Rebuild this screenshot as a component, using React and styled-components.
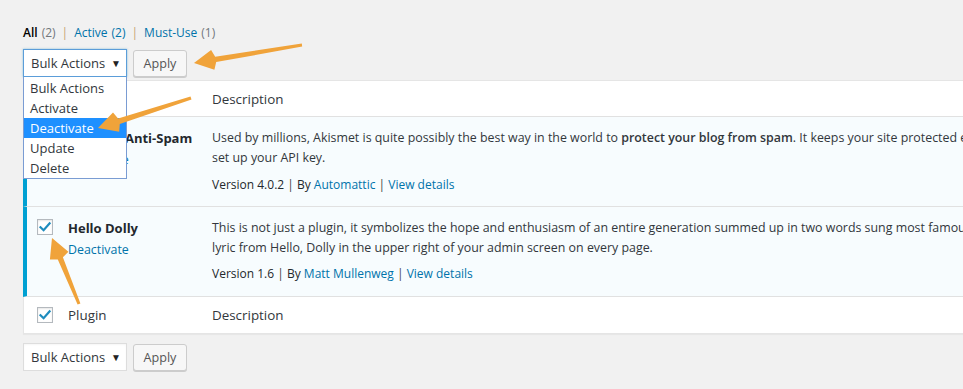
import React from "react";
import styled, { createGlobalStyle } from "styled-components";

const GlobalStyle = createGlobalStyle`
  html, body { margin: 0; padding: 0; background: #f1f1f1; overflow: hidden; }
  body { font-family: "Open Sans", "Noto Sans", sans-serif; font-size: 12px; color: #444; }
`;

const Page = styled.div`
  position: relative;
  width: 963px;
  height: 389px;
  padding: 23px 0 0 23px;
  box-sizing: border-box;
`;

const Subsub = styled.div`
  display: flex;
  align-items: center;
  height: 20px;
  line-height: 20px;
  color: #72777c;
  font-size: 12px;
`;

const FilterLink = styled.span`
  color: ${(p) => (p.$current ? "#000" : "#0073aa")};
  font-weight: ${(p) => (p.$current ? 600 : 400)};
`;

const Count = styled.span`
  color: ${(p) => (p.$link ? "#0073aa" : "#72777c")};
  margin-left: 4px;
`;

const Sep = styled.span`
  color: #c8a370;
  margin: 0 6px;
`;

const TableNav = styled.div`
  display: flex;
  gap: 6px;
  margin: ${(p) => (p.$bottom ? "9px 0 0" : "6px 0 3px")};
`;

const SelectWrap = styled.div`
  position: relative;
  width: 104px;
  height: 28px;
`;

const Select = styled.div`
  box-sizing: border-box;
  width: 104px;
  height: 28px;
  background: #fff;
  border: 1px solid ${(p) => (p.$focus ? "#5b9dd9" : "#ddd")};
  box-shadow: ${(p) => (p.$focus ? "0 0 2px rgba(30,140,190,.5)" : "inset 0 1px 2px rgba(0,0,0,.04)")};
  display: flex;
  align-items: center;
  justify-content: space-between;
  padding: 0 5px 0 7px;
  color: #32373c;
  font-size: 13px;
`;

const Caret = styled.span`
  font-size: 10px;
  color: #222;
`;

const Menu = styled.div`
  position: absolute;
  top: 28px;
  left: 0;
  width: 104px;
  box-sizing: border-box;
  background: #fff;
  border: 1px solid #7a9cd3;
  border-top: none;
  z-index: 5;
  padding: 1px 0 0;
`;

const MenuItem = styled.div`
  height: 20px;
  line-height: 21px;
  padding-left: 6px;
  font-size: 13px;
  color: ${(p) => (p.$active ? "#fff" : "#32373c")};
  background: ${(p) => (p.$active ? "#1e90ff" : "transparent")};
`;

const Button = styled.div`
  box-sizing: border-box;
  width: 54px;
  height: 27px;
  margin-top: 1px;
  background: #f7f7f7;
  border: 1px solid #ccc;
  border-radius: 3px;
  box-shadow: 0 1px 0 #ccc;
  color: #555;
  font-size: 12.6px;
  display: flex;
  align-items: center;
  justify-content: center;
`;

const Table = styled.div`
  width: 1200px;
  background: #fff;
  border: 1px solid #e5e5e5;
  box-shadow: 0 1px 1px rgba(0, 0, 0, 0.04);
`;

const Row = styled.div`
  display: grid;
  grid-template-columns: 41px 144px 1fr;
  background: ${(p) => (p.$active ? "#f7fcfe" : "#fff")};
  border-left: ${(p) => (p.$active ? "4px solid #00a0d2" : "0")};
  margin-left: ${(p) => (p.$active ? "-1px" : "0")};
  padding-left: ${(p) => (p.$active ? "0" : "3px")};
  border-bottom: ${(p) => (p.$last ? "0" : "1px solid #e1e1e1")};
  min-height: ${(p) => p.$h}px;
  box-sizing: border-box;
`;

const CheckCell = styled.div`
  padding: ${(p) => p.$pt}px 0 0 10px;
`;

const Check = styled.div`
  width: 16px;
  height: 16px;
  box-sizing: border-box;
  border: 1px solid #b4b9be;
  background: #fff;
  box-shadow: inset 0 1px 2px rgba(0,0,0,.1);
  display: flex;
  align-items: center;
  justify-content: center;
`;

const HeadText = styled.div`
  font-size: 13.4px;
  color: #32373c;
  padding-top: ${(p) => p.$pt}px;
  line-height: 20px;
`;

const NameCell = styled.div`
  padding-top: 11px;
`;

const Title = styled.div`
  font-weight: 700;
  font-size: 13px;
  color: #23282d;
  line-height: 21px;
`;

const ActionLink = styled.div`
  color: #0073aa;
  font-size: 12.4px;
  line-height: 21px;
`;

const DescCell = styled.div`
  padding: 11px 0 11px;
  font-size: 12.4px;
  line-height: 20px;
  color: #32373c;
`;

const Line = styled.div`
  white-space: nowrap;
`;

const Strong = styled.strong`
  font-weight: 600;
`;

const Version = styled.div`
  margin-top: ${(p) => p.$mt}px;
  white-space: nowrap;
  color: #23282d;
  font-size: 12px;
`;

const Link = styled.span`
  color: #0073aa;
`;

const Bar = styled.span`
  color: #444;
`;

const Overlay = styled.svg`
  position: absolute;
  top: 0;
  left: 0;
  pointer-events: none;
  z-index: 10;
`;

function CheckMark() {
  return (
    <svg width="14" height="14" viewBox="0 0 14 14">
      <path d="M2.5 7.2 L5.6 10.2 L11.6 3.4" fill="none" stroke="#1e8cbe" strokeWidth="2.2" strokeLinecap="square" />
    </svg>
  );
}

function arrowPoints(tail, tip, tw, sw, hl, hw) {
  const dx = tip[0] - tail[0];
  const dy = tip[1] - tail[1];
  const len = Math.hypot(dx, dy);
  const ux = dx / len, uy = dy / len;
  const nx = -uy, ny = ux;
  const bx = tip[0] - ux * hl, by = tip[1] - uy * hl;
  const p = [
    [tail[0] + nx * tw / 2, tail[1] + ny * tw / 2],
    [bx + nx * sw / 2, by + ny * sw / 2],
    [bx + nx * hw + ux * 3, by + ny * hw + uy * 3],
    [tip[0], tip[1]],
    [bx - nx * hw + ux * 3, by - ny * hw + uy * 3],
    [bx - nx * sw / 2, by - ny * sw / 2],
    [tail[0] - nx * tw / 2, tail[1] - ny * tw / 2],
  ];
  return p.map((q) => q.map((v) => v.toFixed(1)).join(",")).join(" ");
}

const arrows = [
  { tail: [302, 45], tip: [194, 63] },
  { tail: [191, 98], tip: [98, 128] },
  { tail: [79, 304], tip: [52, 238] },
];

function BulkSelect({ focus, open }) {
  return (
    <SelectWrap>
      <Select $focus={focus}>
        <span>Bulk Actions</span>
        <Caret>▼</Caret>
      </Select>
      {open && (
        <Menu>
          {["Bulk Actions", "Activate", "Deactivate", "Update", "Delete"].map((t) => (
            <MenuItem key={t} $active={t === "Deactivate"}>{t}</MenuItem>
          ))}
        </Menu>
      )}
    </SelectWrap>
  );
}

function Meta({ version, author }) {
  return (
    <>
      Version {version} <Bar>|</Bar> By <Link>{author}</Link> <Bar>|</Bar> <Link>View details</Link>
    </>
  );
}

export default function App() {
  return (
    <>
      <GlobalStyle />
      <Page>
        <Subsub>
          <FilterLink $current>All</FilterLink>
          <Count>(2)</Count>
          <Sep>|</Sep>
          <FilterLink>Active</FilterLink>
          <Count $link>(2)</Count>
          <Sep>|</Sep>
          <FilterLink>Must-Use</FilterLink>
          <Count>(1)</Count>
        </Subsub>
        <TableNav>
          <BulkSelect focus open />
          <Button>Apply</Button>
        </TableNav>
        <Table>
          <Row $h={36}>
            <CheckCell $pt={10}><Check><CheckMark /></Check></CheckCell>
            <HeadText $pt={8}>Plugin</HeadText>
            <HeadText $pt={8}>Description</HeadText>
          </Row>
          <Row $active $h={90}>
            <CheckCell $pt={12}><Check><CheckMark /></Check></CheckCell>
            <NameCell>
              <Title>Akismet Anti-Spam</Title>
              <ActionLink>Deactivate</ActionLink>
            </NameCell>
            <DescCell>
              <Line>Used by millions, Akismet is quite possibly the best way in the world to <Strong>protect your blog from spam</Strong>. It keeps your site protected even while you sleep. To get started: activate the Akismet plugin and then go to your Akismet Settings page to</Line>
              <Line>set up your API key.</Line>
              <Version $mt={7}><Meta version="4.0.2" author="Automattic" /></Version>
            </DescCell>
          </Row>
          <Row $active $h={90}>
            <CheckCell $pt={12}><Check><CheckMark /></Check></CheckCell>
            <NameCell>
              <Title>Hello Dolly</Title>
              <ActionLink>Deactivate</ActionLink>
            </NameCell>
            <DescCell>
              <Line>This is not just a plugin, it symbolizes the hope and enthusiasm of an entire generation summed up in two words sung most famously by Louis Armstrong: Hello, Dolly.</Line>
              <Line>lyric from Hello, Dolly in the upper right of your admin screen on every page.</Line>
              <Version $mt={6}><Meta version="1.6" author="Matt Mullenweg" /></Version>
            </DescCell>
          </Row>
          <Row $last $h={36}>
            <CheckCell $pt={10}><Check><CheckMark /></Check></CheckCell>
            <HeadText $pt={8}>Plugin</HeadText>
            <HeadText $pt={8}>Description</HeadText>
          </Row>
        </Table>
        <TableNav $bottom>
          <BulkSelect />
          <Button>Apply</Button>
        </TableNav>
        <Overlay width="963" height="389" viewBox="0 0 963 389">
          {arrows.map((a, i) => (
            <polygon key={i} points={arrowPoints(a.tail, a.tip, 3, 5.5, 22, 10)} fill="#f0a33a" />
          ))}
        </Overlay>
      </Page>
    </>
  );
}
